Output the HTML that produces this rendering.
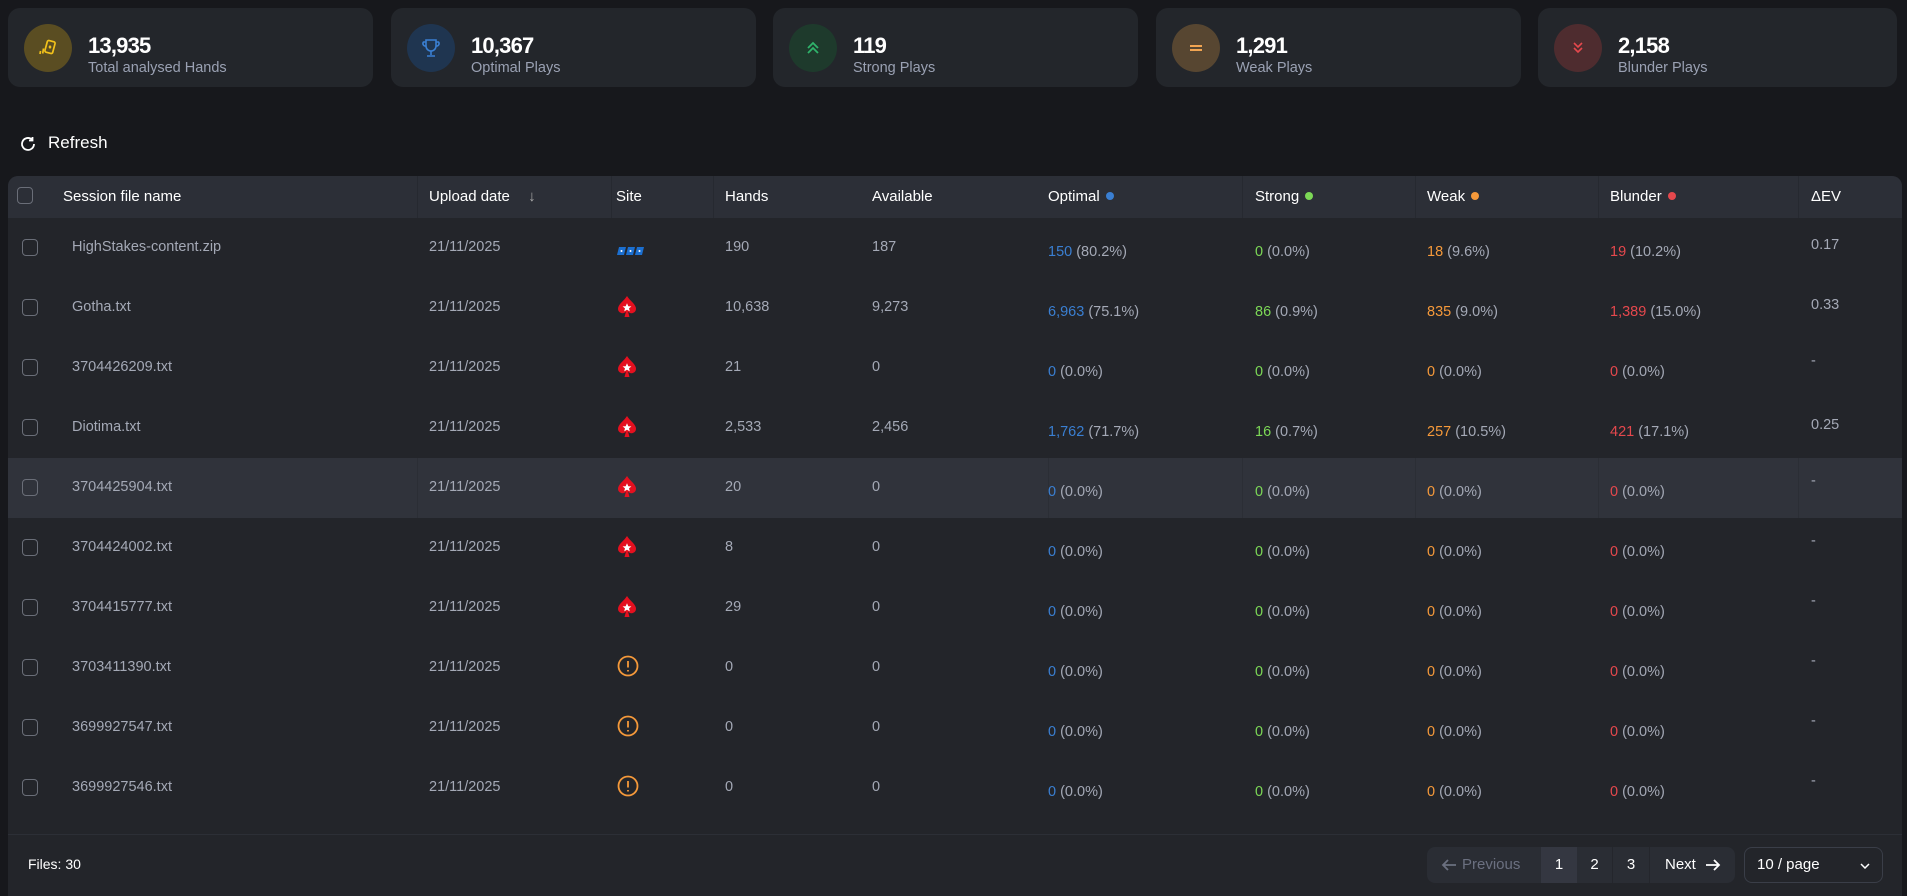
<!DOCTYPE html>
<html><head><meta charset="utf-8"><style>
*{box-sizing:border-box;margin:0;padding:0}
body{width:1907px;height:887px;background:#17181c;font-family:"Liberation Sans",sans-serif;color:#a4a9b6;position:relative;overflow:hidden}
.card{position:absolute;top:8px;height:79px;width:365px;background:#23262b;border-radius:12px}
.card .ic{position:absolute;left:16px;top:16px;width:48px;height:48px;border-radius:50%;display:flex;align-items:center;justify-content:center}
.card .n{position:absolute;left:80px;top:25px;font-size:22px;font-weight:bold;color:#fff;letter-spacing:-0.8px}
.card .l{position:absolute;left:80px;top:52px;font-size:14.5px;color:#9aa1b3}
.abs{position:absolute;white-space:nowrap}
.tbl{position:absolute;left:8px;top:176px;width:1894px;height:720px;background:#23252a;border-radius:10px 10px 0 0;overflow:hidden}
.hdr{position:absolute;left:0;top:0;width:100%;height:42px;background:#2c2f37}
.h{position:absolute;top:12px;font-size:15px;color:#fff}
.vl{position:absolute;top:0;width:1px;height:42px;background:#262930}
.cb{position:absolute;width:16px;height:17px;border:1.5px solid #6a6e78;border-radius:4px}
.row{position:absolute;left:0;width:100%;height:60px}
.c{position:absolute;font-size:14.5px;color:#a4a9b6;white-space:nowrap}
.b{color:#3a7fd2}.g{color:#7cd856}.o{color:#f5993a}.r{color:#e5484d}
.dot{display:inline-block;width:8px;height:8px;border-radius:50%;margin-left:6px;vertical-align:1px}
.pg{position:absolute;top:847px;height:36px;background:#2a2d34;border-radius:8px;font-size:15px;color:#fff}
</style></head><body>

<div class="card" style="left:8px"><div class="ic" style="background:#5a4d22"><svg width="22" height="22" viewBox="0 0 22 22" fill="none" stroke="#f2c21b" stroke-width="1.7"><rect x="9" y="4" width="8" height="12" rx="1.5" transform="rotate(15 13 10)"/><path d="M13 8l1.6 2-1.6 2-1.6-2z" fill="#f2c21b" stroke="none"/><path d="M6.5 11.5l-.8 5M3.5 14l-.5 3"/></svg></div><div class="n">13,935</div><div class="l">Total analysed Hands</div></div>
<div class="card" style="left:391px"><div class="ic" style="background:#1f3550"><svg width="20" height="22" viewBox="0 0 20 22" fill="none" stroke="#3a7fd2" stroke-width="1.6"><path d="M5 3h10v6a5 5 0 0 1-10 0z"/><path d="M5 5H2.5a2.5 2.5 0 0 0 2.5 4M15 5h2.5a2.5 2.5 0 0 1-2.5 4M10 14v4M6 19h8"/></svg></div><div class="n">10,367</div><div class="l">Optimal Plays</div></div>
<div class="card" style="left:773px"><div class="ic" style="background:#1e3a2c"><svg width="20" height="20" viewBox="0 0 20 20" fill="none" stroke="#2fb36b" stroke-width="1.8"><path d="M5 10l5-5 5 5M5 15l5-5 5 5"/></svg></div><div class="n">119</div><div class="l">Strong Plays</div></div>
<div class="card" style="left:1156px"><div class="ic" style="background:#574631"><svg width="18" height="12" viewBox="0 0 18 12" stroke="#f2a552" stroke-width="2"><path d="M3 4h12M3 8h12"/></svg></div><div class="n">1,291</div><div class="l">Weak Plays</div></div>
<div class="card" style="left:1538px;width:359px"><div class="ic" style="background:#4e2c2f"><svg width="20" height="20" viewBox="0 0 20 20" fill="none" stroke="#e5484d" stroke-width="1.6"><path d="M6 5l4 4 4-4M6 10l4 4 4-4"/></svg></div><div class="n">2,158</div><div class="l">Blunder Plays</div></div>

<svg class="abs" style="left:19px;top:135px" width="18" height="18" viewBox="0 0 18 18" fill="none" stroke="#fff" stroke-width="1.8"><path d="M15 9a6 6 0 1 1-2-4.5"/><path d="M13.5 2v3.5H10"/></svg>
<div class="abs" style="left:48px;top:133px;font-size:17px;color:#fff">Refresh</div>

<div class="tbl">
<div class="hdr">
<div class="cb" style="left:9px;top:11px"></div>
<div class="h" style="left:55px">Session file name</div>
<div class="vl" style="left:409px"></div>
<div class="h" style="left:421px">Upload date <span style="margin-left:14px;color:#aaa">↓</span></div>
<div class="vl" style="left:603px"></div>
<div class="h" style="left:608px">Site</div>
<div class="vl" style="left:705px"></div>
<div class="h" style="left:717px">Hands</div>
<div class="h" style="left:864px">Available</div>
<div class="h" style="left:1040px">Optimal<span class="dot" style="background:#3a7fd2"></span></div>
<div class="vl" style="left:1234px"></div>
<div class="h" style="left:1247px">Strong<span class="dot" style="background:#7cd856"></span></div>
<div class="vl" style="left:1407px"></div>
<div class="h" style="left:1419px">Weak<span class="dot" style="background:#f5993a"></span></div>
<div class="vl" style="left:1590px"></div>
<div class="h" style="left:1602px">Blunder<span class="dot" style="background:#e5484d"></span></div>
<div class="vl" style="left:1790px"></div>
<div class="h" style="left:1803px">ΔEV</div>
</div>
<div id="rows"></div>
<div style="position:absolute;left:0;top:658px;width:100%;height:1px;background:#2c2f36"></div>
<div class="abs" style="left:20px;top:680px;font-size:14px;color:#fff">Files: 30</div>
</div>

<div class="pg" style="left:1427px;width:308px">
<svg class="abs" style="left:14px;top:11px" width="16" height="14" viewBox="0 0 16 14" fill="none" stroke="#6b7080" stroke-width="1.8"><path d="M15 7H2M7 2L2 7l5 5"/></svg>
<div class="abs" style="left:35px;top:9px;color:#6b7080">Previous</div>
<div class="abs" style="left:114px;top:0;width:36px;height:36px;background:#343741;text-align:center;line-height:36px">1</div>
<div class="abs" style="left:150px;top:0;width:36px;height:36px;text-align:center;line-height:36px;border-right:1px solid #24262c">2</div>
<div class="abs" style="left:186px;top:0;width:37px;height:36px;text-align:center;line-height:36px;border-right:1px solid #24262c">3</div>
<div class="abs" style="left:238px;top:9px">Next</div>
<svg class="abs" style="left:278px;top:11px" width="16" height="14" viewBox="0 0 16 14" fill="none" stroke="#fff" stroke-width="1.8"><path d="M1 7h13M9 2l5 5-5 5"/></svg>
</div>
<div class="abs" style="left:1744px;top:847px;width:139px;height:36px;border:1px solid #3a3e48;border-radius:8px;background:#23252a;font-size:15px;color:#fff;padding:8px 0 0 12px">10 / page<svg style="position:absolute;right:12px;top:15px" width="10" height="6" viewBox="0 0 10 6" fill="none" stroke="#fff" stroke-width="1.5"><path d="M1 1l4 4 4-4"/></svg></div>

<script>
const spade='<svg width="20" height="24" viewBox="0 0 20 24"><path d="M10 1C7 6 1 9 1 14a4.5 4.5 0 0 0 8 2.5L7.5 22h5L11 16.5A4.5 4.5 0 0 0 19 14C19 9 13 6 10 1z" fill="#e4101f"/><path d="M10 8.3l1.3 2.9 3.1.2-2.4 2 .8 3-2.8-1.7-2.8 1.7.8-3-2.4-2 3.1-.2z" fill="#fff"/></svg>';
const warn='<svg width="22" height="22" viewBox="0 0 22 22" fill="none" stroke="#f5993a" stroke-width="1.8"><circle cx="11" cy="11" r="9.5"/><path d="M11 6v6.5M11 15v1.5"/></svg>';
const ggp='<svg width="28" height="10" viewBox="0 0 28 10"><g fill="#1b6fd0"><path d="M2 1h7l-2 8H0z"/><path d="M11 1h7l-2 8H9z"/><path d="M20 1h7l-2 8h-7z"/></g><g fill="#fff"><circle cx="4.5" cy="5" r="1"/><circle cx="13.5" cy="5" r="1"/><circle cx="22.5" cy="5" r="1"/></g></svg>';
const R=[
["HighStakes-content.zip",ggp,"190","187",["150","80.2%"],["0","0.0%"],["18","9.6%"],["19","10.2%"],"0.17"],
["Gotha.txt",spade,"10,638","9,273",["6,963","75.1%"],["86","0.9%"],["835","9.0%"],["1,389","15.0%"],"0.33"],
["3704426209.txt",spade,"21","0",["0","0.0%"],["0","0.0%"],["0","0.0%"],["0","0.0%"],"-"],
["Diotima.txt",spade,"2,533","2,456",["1,762","71.7%"],["16","0.7%"],["257","10.5%"],["421","17.1%"],"0.25"],
["3704425904.txt",spade,"20","0",["0","0.0%"],["0","0.0%"],["0","0.0%"],["0","0.0%"],"-"],
["3704424002.txt",spade,"8","0",["0","0.0%"],["0","0.0%"],["0","0.0%"],["0","0.0%"],"-"],
["3704415777.txt",spade,"29","0",["0","0.0%"],["0","0.0%"],["0","0.0%"],["0","0.0%"],"-"],
["3703411390.txt",warn,"0","0",["0","0.0%"],["0","0.0%"],["0","0.0%"],["0","0.0%"],"-"],
["3699927547.txt",warn,"0","0",["0","0.0%"],["0","0.0%"],["0","0.0%"],["0","0.0%"],"-"],
["3699927546.txt",warn,"0","0",["0","0.0%"],["0","0.0%"],["0","0.0%"],["0","0.0%"],"-"]];
let h='';
R.forEach((r,i)=>{
 const top=42+i*60, hov=i==4;
 const p=(v,cls,x)=>`<div class="c" style="left:${x}px;top:26px"><span class="${cls}">${v[0]}</span> (${v[1]})</div>`;
 h+=`<div class="row" style="top:${top}px;${hov?'background:#30333b':''}">`+
 (hov?'<div style="position:absolute;left:409px;top:0;width:1px;height:60px;background:#2b2e35"></div><div style="position:absolute;left:1040px;top:0;width:1px;height:60px;background:#2b2e35"></div><div style="position:absolute;left:1234px;top:0;width:1px;height:60px;background:#2b2e35"></div><div style="position:absolute;left:1407px;top:0;width:1px;height:60px;background:#2b2e35"></div><div style="position:absolute;left:1590px;top:0;width:1px;height:60px;background:#2b2e35"></div><div style="position:absolute;left:1790px;top:0;width:1px;height:60px;background:#2b2e35"></div>':'')+
 `<div class="cb" style="left:14px;top:21px"></div>
 <div class="c" style="left:64px;top:21px">${r[0]}</div>
 <div class="c" style="left:421px;top:21px">21/11/2025</div>
 <div style="position:absolute;left:609px;top:${i==0?25:17}px">${r[1]}</div>
 <div class="c" style="left:717px;top:21px">${r[2]}</div>
 <div class="c" style="left:864px;top:21px">${r[3]}</div>`+
 p(r[4],'b',1040)+p(r[5],'g',1247)+p(r[6],'o',1419)+p(r[7],'r',1602)+
 `<div class="c" style="left:1803px;top:${r[8]=='-'?15:19}px">${r[8]}</div></div>`;
});
document.getElementById('rows').innerHTML=h;
</script>
</body></html>
